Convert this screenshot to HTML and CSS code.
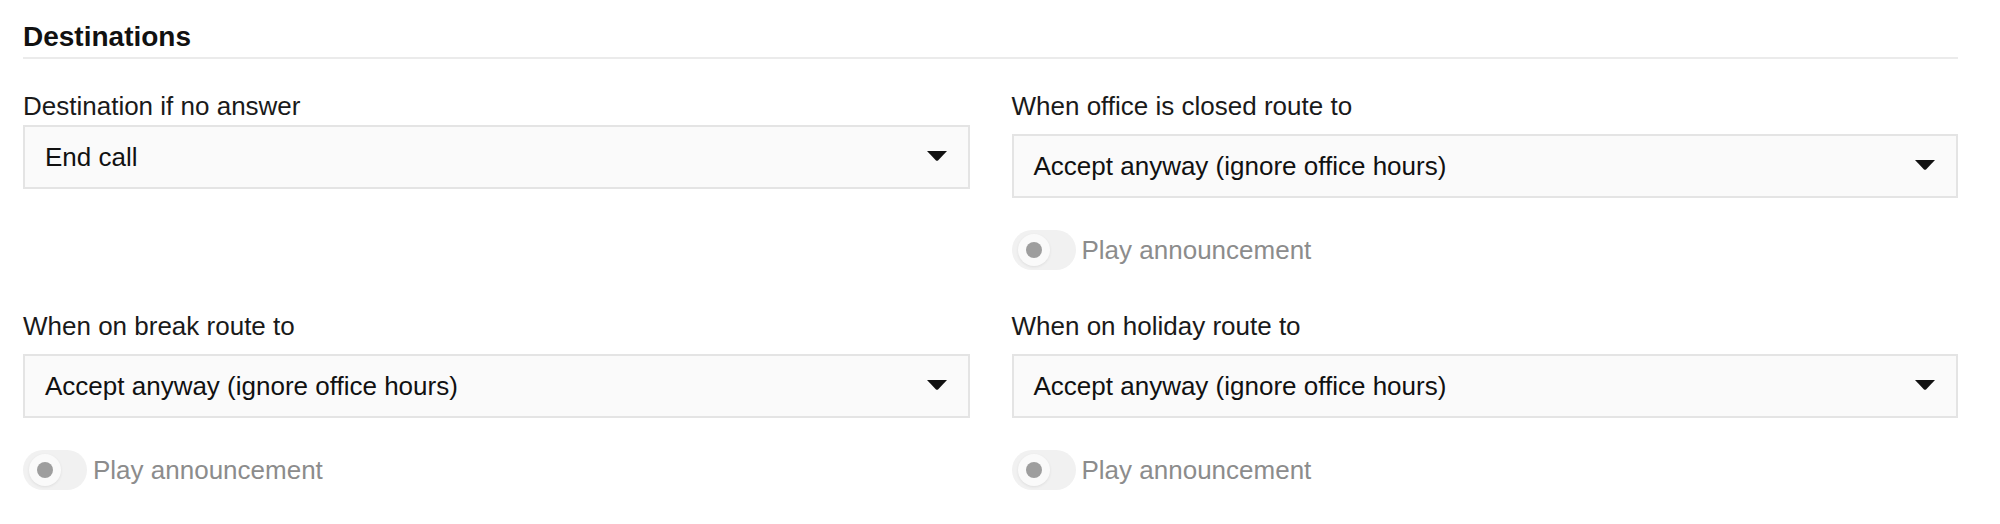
FILE: index.html
```html
<!DOCTYPE html>
<html lang="en">
<head>
<meta charset="utf-8">
<title>Destinations</title>
<link rel="stylesheet" href="styles.css">
</head>
<body>
<section class="panel">
  <h2 class="panel-title">Destinations</h2>
  <div class="grid">
    <div class="field">
      <label class="field-label field-label--tight">Destination if no answer</label>
      <div class="select">
        <span class="select-value">End call</span>
        <svg class="caret" width="20" height="10" viewBox="0 0 20 10"><path d="M0 0 H20 L11 9.4 Q10 10.2 9 9.4 Z" fill="#111"/></svg>
      </div>
    </div>
    <div class="field">
      <label class="field-label">When office is closed route to</label>
      <div class="select">
        <span class="select-value">Accept anyway (ignore office hours)</span>
        <svg class="caret" width="20" height="10" viewBox="0 0 20 10"><path d="M0 0 H20 L11 9.4 Q10 10.2 9 9.4 Z" fill="#111"/></svg>
      </div>
      <div class="toggle-row">
        <span class="toggle"><span class="knob"><span class="dot"></span></span></span>
        <span class="toggle-text">Play announcement</span>
      </div>
    </div>
    <div class="field">
      <label class="field-label">When on break route to</label>
      <div class="select">
        <span class="select-value">Accept anyway (ignore office hours)</span>
        <svg class="caret" width="20" height="10" viewBox="0 0 20 10"><path d="M0 0 H20 L11 9.4 Q10 10.2 9 9.4 Z" fill="#111"/></svg>
      </div>
      <div class="toggle-row">
        <span class="toggle"><span class="knob"><span class="dot"></span></span></span>
        <span class="toggle-text">Play announcement</span>
      </div>
    </div>
    <div class="field">
      <label class="field-label">When on holiday route to</label>
      <div class="select">
        <span class="select-value">Accept anyway (ignore office hours)</span>
        <svg class="caret" width="20" height="10" viewBox="0 0 20 10"><path d="M0 0 H20 L11 9.4 Q10 10.2 9 9.4 Z" fill="#111"/></svg>
      </div>
      <div class="toggle-row">
        <span class="toggle"><span class="knob"><span class="dot"></span></span></span>
        <span class="toggle-text">Play announcement</span>
      </div>
    </div>
  </div>
</section>
</body>
</html>
```
FILE: styles.css
```css
* { box-sizing: border-box; }
html, body { margin: 0; background: #fff; }
body {
  font-family: "Liberation Sans", Arial, sans-serif;
  color: #1a1a1a;
}
.panel {
  padding: 21px 42px 0 23px;
}
.panel-title {
  margin: 0;
  font-size: 28px;
  line-height: 32px;
  font-weight: 700;
  color: #111;
  padding-bottom: 4px;
  border-bottom: 2px solid #ebebeb;
}
.grid {
  margin-top: 32px;
  display: grid;
  grid-template-columns: 1fr 1fr;
  column-gap: 42px;
  row-gap: 41px;
  align-items: start;
}
.field {
  display: flex;
  flex-direction: column;
}
.field-label {
  font-size: 26px;
  line-height: 30px;
  color: #1a1a1a;
  margin-bottom: 13px;
}
.field-label--tight { margin-bottom: 4px; }
.select {
  height: 64px;
  border: 2px solid #e4e4e4;
  background: #fafafa;
  display: flex;
  align-items: center;
  justify-content: space-between;
  padding: 0 21px 0 20px;
}
.select-value {
  font-size: 26px;
  line-height: 30px;
  color: #111;
}
.caret { display: block; margin-top: -2px; }
.toggle-row {
  margin-top: 32px;
  display: flex;
  align-items: center;
  gap: 6px;
}
.toggle {
  width: 64px;
  height: 40px;
  border-radius: 20px;
  background: #f1f1f1;
  display: flex;
  align-items: center;
  padding-left: 6px;
}
.knob {
  width: 32px;
  height: 32px;
  border-radius: 50%;
  background: #fafafa;
  box-shadow: 0 1px 3px rgba(0,0,0,0.08);
  display: flex;
  align-items: center;
  justify-content: center;
}
.dot {
  width: 16px;
  height: 16px;
  border-radius: 50%;
  background: #9e9e9e;
}
.toggle-text {
  font-size: 26px;
  line-height: 30px;
  color: #8c8c8c;
}
```
